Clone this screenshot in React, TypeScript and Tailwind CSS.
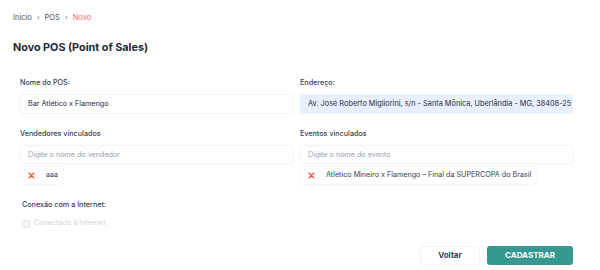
import { useState } from "react";

function ChevronSep() {
  return <span className="mx-[5px] text-[7px] text-gray-500">›</span>;
}

function Chip({ label }: { label: string }) {
  return (
    <div className="flex">
      <div className="flex h-[17px] items-center gap-[11px] rounded-[3px] bg-white pl-[8px] pr-[5px] shadow-[0_0_2px_rgba(0,0,0,0.12)]">
        <svg width="7" height="7" viewBox="0 0 7 7">
          <path d="M1 1 L6 6 M6 1 L1 6" stroke="#ef4444" strokeWidth="1.1" strokeLinecap="round" />
        </svg>
        <span className="text-[7.2px] text-gray-700">{label}</span>
      </div>
    </div>
  );
}

export default function App() {
  const [nome, setNome] = useState("Bar Atlético x Flamengo");
  const [endereco, setEndereco] = useState(
    "Av. José Roberto Migliorini, s/n - Santa Mônica, Uberlândia - MG, 38408-250"
  );

  return (
    <div className="min-h-screen w-[600px] bg-white font-['Inter',sans-serif] text-gray-800">
      <div className="px-[13px] pt-[12px]">
        <nav className="flex h-[12px] items-center text-[7.5px] text-gray-600">
          <span>Inicio</span>
          <ChevronSep />
          <span>POS</span>
          <ChevronSep />
          <span className="text-red-400">Novo</span>
        </nav>
        <h1 className="mt-[17px] text-[10.8px] font-bold leading-[14px] text-gray-800">Novo POS (Point of Sales)</h1>
      </div>

      <div className="mt-[23px] px-[20px] pr-[27px]">
        <div className="grid grid-cols-2 gap-x-[7px]">
          <div>
            <label className="block h-[10px] text-[7.2px] leading-[10px] font-medium text-gray-700">Nome do POS:</label>
            <input
              value={nome}
              onChange={(e) => setNome(e.target.value)}
              className="mt-[3px] h-[20px] w-full rounded-[3px] border border-gray-100 px-[7px] text-[7.2px] text-gray-800 shadow-[0_0_1px_rgba(0,0,0,0.08)] outline-none"
            />
          </div>
          <div>
            <label className="block h-[10px] text-[7.2px] leading-[10px] font-medium text-gray-700">Endereço:</label>
            <input
              value={endereco}
              onChange={(e) => setEndereco(e.target.value)}
              className="mt-[3px] h-[20px] w-full rounded-[3px] border border-[#e8f0fe] bg-[#e8f0fe] pl-[7px] pr-[1px] text-[7.35px] text-gray-800 outline-none"
            />
          </div>

          <div className="mt-[15px]">
            <label className="block h-[10px] text-[7.2px] leading-[10px] font-medium text-gray-700">Vendedores vinculados</label>
            <input
              placeholder="Digite o nome do vendedor"
              className="mt-[5px] h-[19px] w-full rounded-[3px] border border-gray-100 px-[7px] text-[7.2px] shadow-[0_0_1px_rgba(0,0,0,0.08)] outline-none placeholder:text-gray-400"
            />
            <div className="mt-[3px]">
              <Chip label="aaa" />
            </div>
          </div>
          <div className="mt-[15px]">
            <label className="block h-[10px] text-[7.2px] leading-[10px] font-medium text-gray-700">Eventos vinculados</label>
            <input
              placeholder="Digite o nome do evento"
              className="mt-[5px] h-[19px] w-full rounded-[3px] border border-gray-100 px-[7px] text-[7.2px] shadow-[0_0_1px_rgba(0,0,0,0.08)] outline-none placeholder:text-gray-400"
            />
            <div className="mt-[3px]">
              <Chip label="Atlético Mineiro x Flamengo – Final da SUPERCOPA do Brasil" />
            </div>
          </div>
        </div>

        <div className="mt-[16px] pl-[2px]">
          <div className="h-[10px] text-[7.2px] leading-[10px] font-medium text-gray-700">Conexão com a Internet:</div>
          <label className="mt-[9px] flex h-[10px] items-center gap-[4px] text-[7.2px] text-gray-300">
            <span className="h-[8px] w-[8px] rounded-[1px] border border-gray-200 bg-gray-100" />
            Conectado à Internet
          </label>
        </div>

        <div className="mt-[17px] flex justify-end gap-[7px]">
          <button className="h-[19px] w-[60px] rounded-[3px] border border-gray-100 bg-white text-[8px] font-bold text-gray-700 shadow-[0_0_1px_rgba(0,0,0,0.08)]">
            Voltar
          </button>
          <button className="h-[19px] w-[86px] rounded-[3px] bg-[#349a90] text-[8px] font-bold text-white">
            CADASTRAR
          </button>
        </div>
      </div>
    </div>
  );
}
